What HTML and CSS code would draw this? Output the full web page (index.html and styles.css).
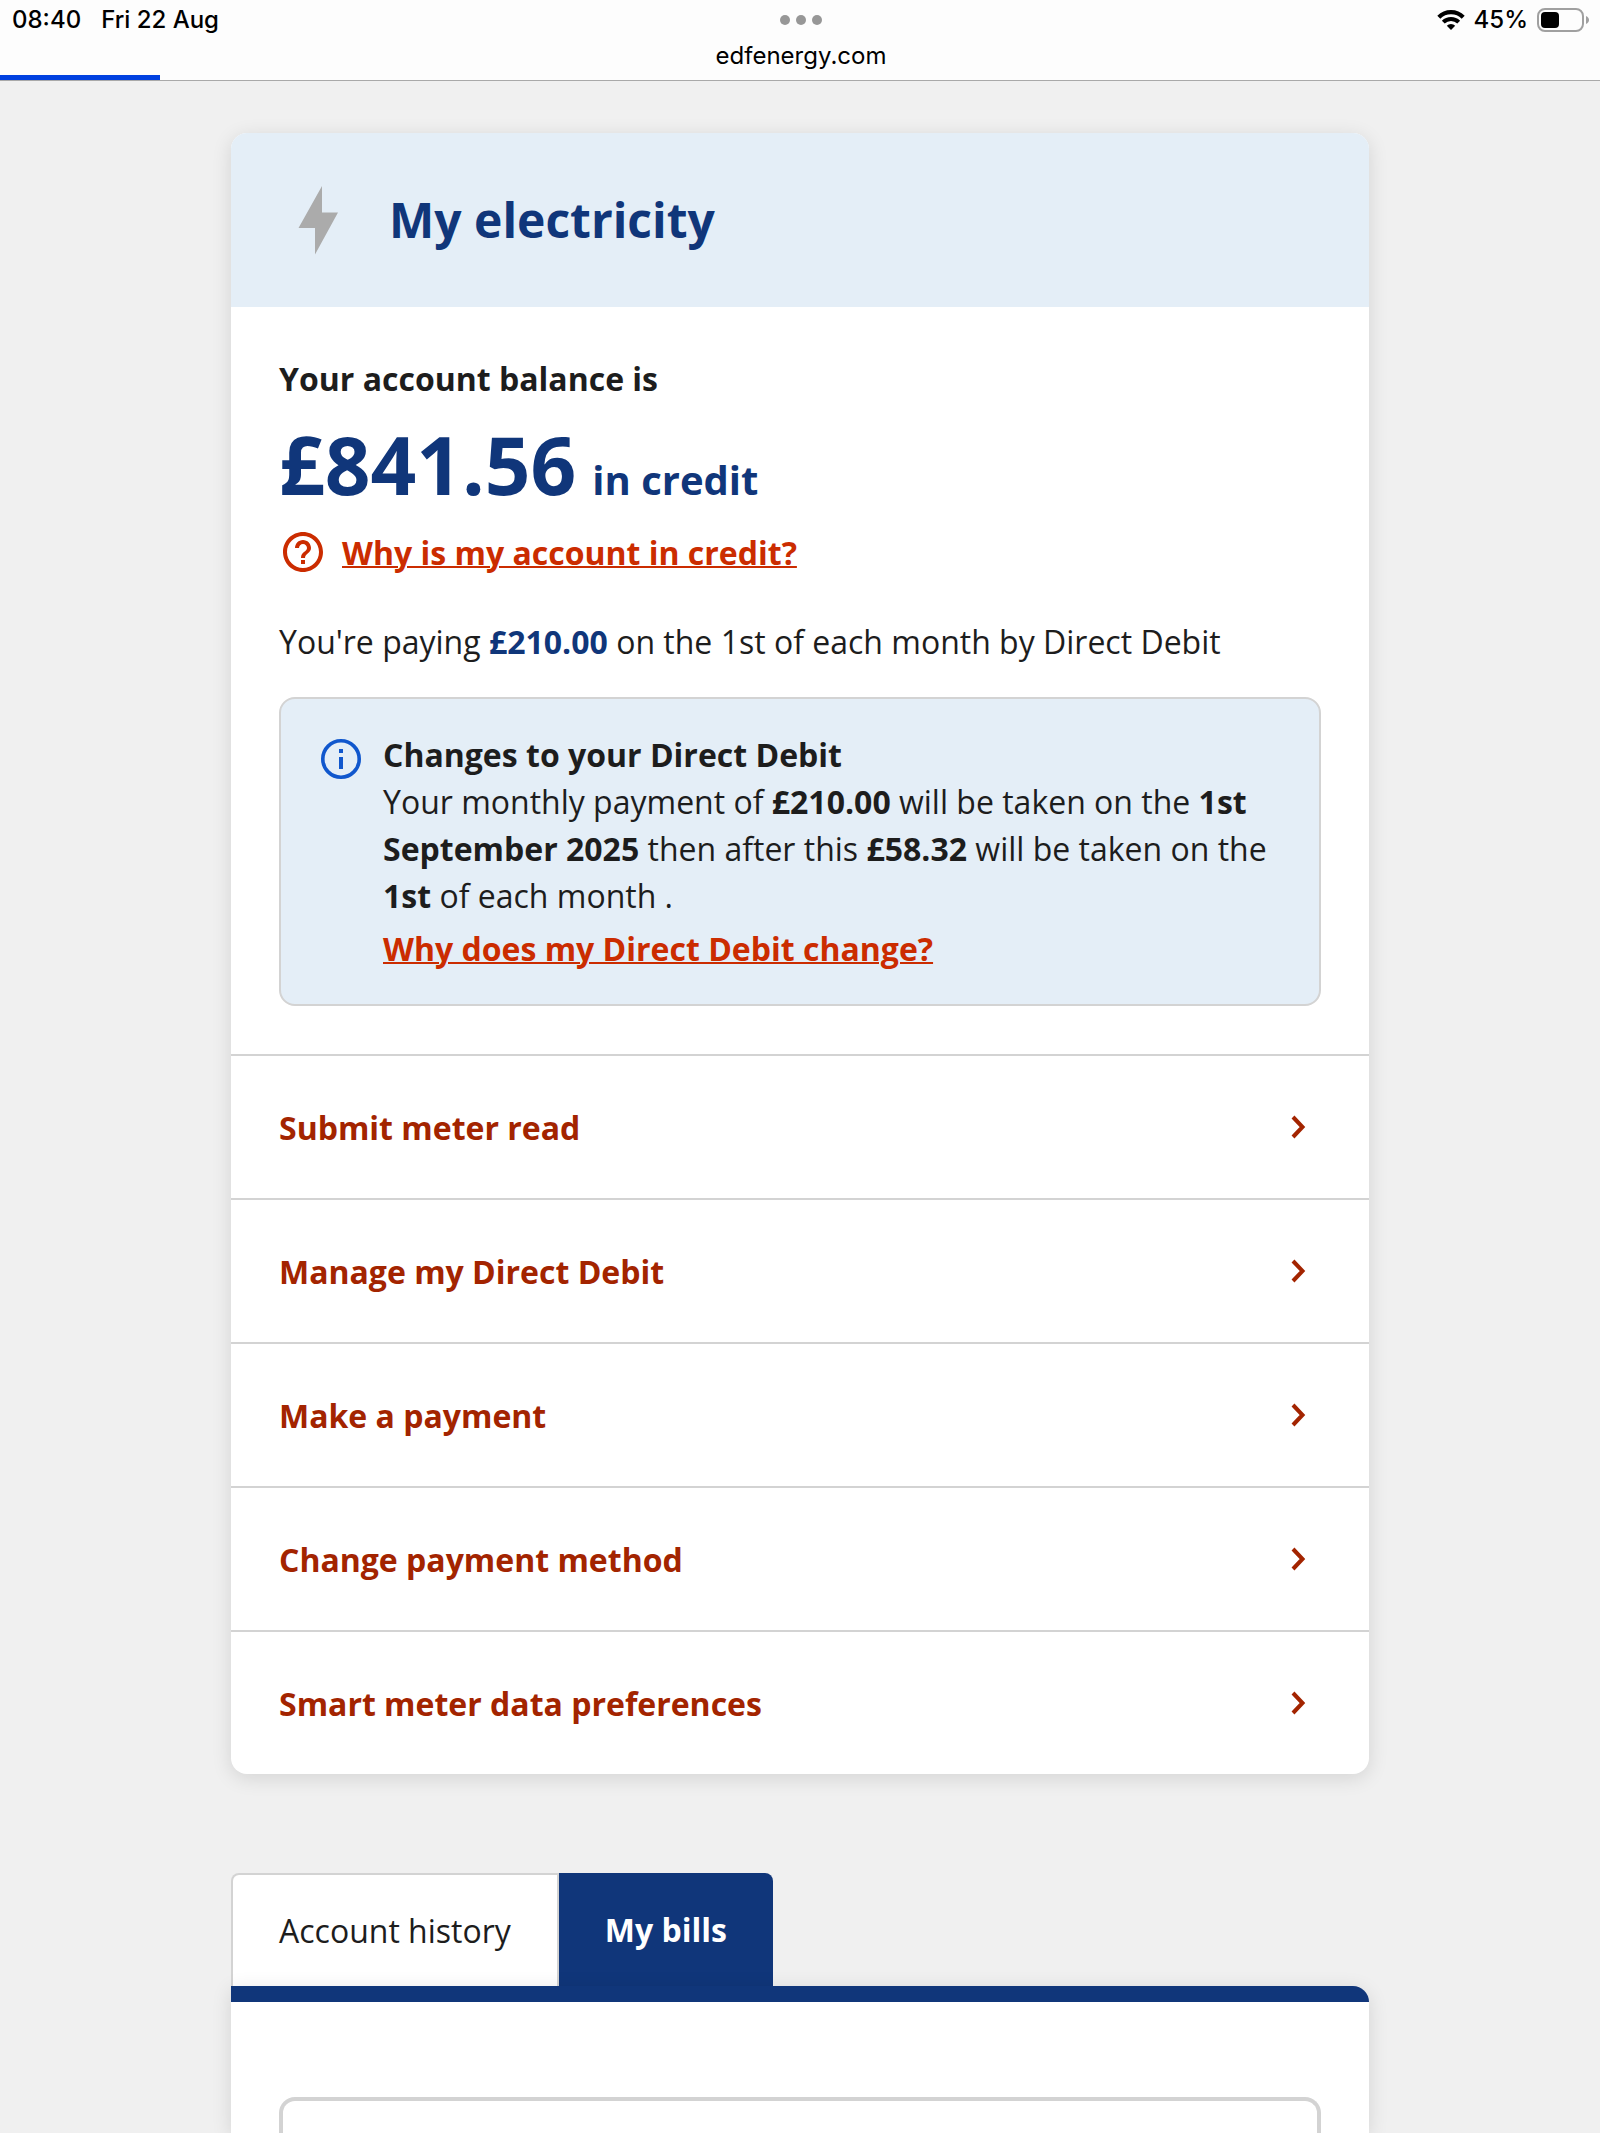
FILE: index.html
```html
<!DOCTYPE html>
<html lang="en">
<head>
  <meta charset="UTF-8">
  <meta name="viewport" content="width=device-width, initial-scale=1.0">
  <title>My electricity</title>
  <link rel="stylesheet" href="styles.css">
</head>
<body>
  <header class="browser-bar">
    <div class="status-left">
      <span>08:40</span>
      <span>Fri 22 Aug</span>
    </div>
    <div class="address">
      <svg class="dots" viewBox="0 0 42 10" aria-hidden="true">
        <circle cx="5" cy="5" r="5"/><circle cx="21" cy="5" r="5"/><circle cx="37" cy="5" r="5"/>
      </svg>
      <span>edfenergy.com</span>
    </div>
    <div class="status-right">
      <svg class="wifi" viewBox="0 0 28 20" aria-hidden="true">
        <path d="M1.800 7.200a17.200 17.200 0 0 1 24.400 0" fill="none" stroke="#000" stroke-width="4.200"/>
        <path d="M6.300 12.200a10.900 10.900 0 0 1 15.400 0" fill="none" stroke="#000" stroke-width="4"/>
        <path d="M14 20l-4.200-4.300a5.900 5.900 0 0 1 8.400 0z"/>
      </svg>
      <span>45%</span>
      <svg class="battery" viewBox="0 0 53 24" aria-hidden="true">
        <rect x="1" y="1" width="45" height="22" rx="7" fill="none" stroke="#a0a0a0" stroke-width="2"/>
        <rect x="4" y="4" width="18" height="16" rx="4"/>
        <path d="M49 8c4 1.500 4 6.500 0 8z" fill="#a0a0a0"/>
      </svg>
    </div>
    <div class="progress"></div>
  </header>

  <main class="page">
    <section class="card">
      <div class="card-header">
        <svg class="bolt" viewBox="0 0 78 78" aria-hidden="true">
          <path d="M43 5v26.500h16L36 73.500V47H19.500z" fill="#ababab"/>
        </svg>
        <h1>My electricity</h1>
      </div>

      <div class="card-body">
        <h2>Your account balance is</h2>
        <p class="balance"><strong>£841.56</strong> <span>in credit</span></p>
        <div class="help">
          <svg class="icon" viewBox="0 0 24 24" aria-hidden="true">
            <path fill="#cb2c00" d="M11 18h2v-2h-2v2zm1-16C6.480 2 2 6.480 2 12s4.480 10 10 10 10-4.480 10-10S17.520 2 12 2zm0 18c-4.410 0-8-3.590-8-8s3.590-8 8-8 8 3.590 8 8-3.590 8-8 8zm0-14c-2.210 0-4 1.790-4 4h2c0-1.100.9-2 2-2s2 .9 2 2c0 2-3 1.750-3 5h2c0-2.250 3-2.500 3-5 0-2.210-1.790-4-4-4z"/>
          </svg>
          <a class="link" href="#">Why is my account in credit?</a>
        </div>
        <p class="paying">You're paying <strong>£210.00</strong> on the 1st of each month by Direct Debit</p>

        <div class="notice">
          <svg class="icon" viewBox="0 0 24 24" aria-hidden="true">
            <circle cx="12" cy="12" r="9.100" fill="none" stroke="#1057cd" stroke-width="1.800"/>
            <path fill="#1057cd" d="M11 7h2v2h-2zM11 11h2v6h-2z"/>
          </svg>
          <div class="notice-text">
            <h3>Changes to your Direct Debit</h3>
            <p>Your monthly payment of <strong>£210.00</strong> will be taken on the <strong>1st September 2025</strong> then after this <strong>£58.32</strong> will be taken on the <strong>1st</strong> of each month .</p>
            <a class="link" href="#">Why does my Direct Debit change?</a>
          </div>
        </div>
      </div>

      <nav class="actions">
        <a href="#">Submit meter read
          <svg class="chevron" viewBox="0 0 16 24" aria-hidden="true"><path d="M3 2l9.500 10L3 22"/></svg></a>
        <a href="#">Manage my Direct Debit
          <svg class="chevron" viewBox="0 0 16 24" aria-hidden="true"><path d="M3 2l9.500 10L3 22"/></svg></a>
        <a href="#">Make a payment
          <svg class="chevron" viewBox="0 0 16 24" aria-hidden="true"><path d="M3 2l9.500 10L3 22"/></svg></a>
        <a href="#">Change payment method
          <svg class="chevron" viewBox="0 0 16 24" aria-hidden="true"><path d="M3 2l9.500 10L3 22"/></svg></a>
        <a href="#">Smart meter data preferences
          <svg class="chevron" viewBox="0 0 16 24" aria-hidden="true"><path d="M3 2l9.500 10L3 22"/></svg></a>
      </nav>
    </section>

    <section class="bills">
      <div class="tabs" role="tablist">
        <button class="tab" type="button" role="tab" aria-selected="false">Account history</button>
        <button class="tab active" type="button" role="tab" aria-selected="true">My bills</button>
      </div>
      <div class="panel" role="tabpanel">
        <div class="bill-box"></div>
      </div>
    </section>
  </main>
</body>
</html>
```
FILE: styles.css
```css
:root {
  --navy: #10367a;
  --pale-blue: #e4eef7;
  --link: #cb2c00;
  --action: #a32400;
  --text: #1d1d1d;
  --line: #d3d3d3;
  --shadow: 0 4px 20px rgba(0, 0, 0, 0.12);
}

* {
  box-sizing: border-box;
}

body {
  margin: 0;
  min-height: 100vh;
  display: flex;
  flex-direction: column;
  background-color: #f0f0f0;
  color: var(--text);
  font-family: "Open Sans", "Noto Sans", sans-serif;
  font-size: 32px;
  line-height: 47px;
}

h1, h2, h3, p {
  margin: 0;
}

h2, h3 {
  font-size: 32px;
}

strong {
  font-weight: 700;
}

/* Browser bar */
.browser-bar {
  position: relative;
  display: grid;
  grid-template-columns: 1fr auto 1fr;
  height: 81px;
  padding: 0 10px 0 12px;
  background-color: #fdfdfd;
  border-bottom: 1px solid #a9a9a9;
  color: #000;
  font-family: Inter, "Liberation Sans", sans-serif;
  font-size: 24px;
  font-weight: 500;
  line-height: 40px;
}

.status-left, .status-right {
  display: flex;
  align-items: center;
  height: 40px;
}

.status-left {
  gap: 20px;
}

.status-right {
  justify-content: flex-end;
  gap: 9px;
}

.address {
  display: flex;
  flex-direction: column;
  align-items: center;
  padding-top: 15px;
  font-weight: 400;
  line-height: 32px;
  gap: 15px;
}

.dots {
  width: 42px;
  height: 10px;
  fill: #979797;
}

.wifi {
  width: 28px;
  height: 20px;
}

.battery {
  width: 53px;
  height: 24px;
}

.progress {
  position: absolute;
  left: 0;
  bottom: 0;
  width: 10%;
  height: 5px;
  background-color: #0040e0;
}

/* Account card */
.page {
  flex: 1;
  display: flex;
  flex-direction: column;
  width: calc(100% - 32px);
  max-width: 1138px;
  margin: 0 auto;
  padding-top: 52px;
}

.card {
  background-color: #fff;
  border-radius: 16px;
  box-shadow: var(--shadow);
  overflow: hidden;
}

.card-header {
  display: flex;
  align-items: center;
  gap: 32px;
  padding: 48px;
  background-color: var(--pale-blue);
}

.card-header h1 {
  color: var(--navy);
  font-size: 48px;
  line-height: 66px;
}

.bolt {
  width: 78px;
  height: 78px;
}

.card-body {
  padding: 48px;
}

.balance {
  display: flex;
  align-items: baseline;
  gap: 16px;
  margin-top: 14px;
  color: var(--navy);
  font-size: 40px;
  font-weight: 700;
  line-height: 48px;
}

.balance strong {
  font-size: 80px;
  line-height: 96px;
}

.help {
  display: flex;
  align-items: center;
  gap: 15px;
  margin-top: 16px;
}

.icon {
  flex: none;
  width: 48px;
  height: 48px;
}

.link {
  color: var(--link);
  font-weight: 700;
  text-decoration-thickness: 2px;
}

.paying {
  margin: 42px 0 32px;
}

.paying strong {
  color: var(--navy);
}

.notice {
  display: flex;
  gap: 18px;
  padding: 32px 36px;
  background-color: var(--pale-blue);
  border: 2px solid var(--line);
  border-radius: 16px;
}

.notice .icon {
  margin-top: 4px;
}

.notice .link {
  display: inline-block;
  margin-top: 6px;
}

.actions a {
  display: flex;
  justify-content: space-between;
  align-items: center;
  height: 144px;
  padding: 0 63px 0 48px;
  border-top: 2px solid var(--line);
  color: var(--action);
  font-weight: 700;
  text-decoration: none;
}

.chevron {
  width: 16px;
  height: 24px;
  fill: none;
  stroke: var(--action);
  stroke-width: 4;
}

/* Bills tabs */
.bills {
  flex: 1;
  display: flex;
  flex-direction: column;
  margin-top: 99px;
}

.tabs {
  display: flex;
}

.tab {
  height: 113px;
  padding: 0 46px;
  background-color: #fff;
  border: 2px solid var(--line);
  border-bottom: 0;
  border-radius: 8px 0 0 0;
  color: var(--text);
  font: inherit;
}

.tab.active {
  background-color: var(--navy);
  border: 0;
  border-radius: 0 8px 0 0;
  color: #fff;
  font-weight: 700;
}

.panel {
  flex: 1;
  display: flex;
  padding: 95px 48px 0;
  background: linear-gradient(var(--navy) 16px, #fff 16px);
  border-radius: 0 16px 0 0;
  box-shadow: var(--shadow);
}

.bill-box {
  flex: 1;
  margin-top: 16px;
  border: 4px solid var(--line);
  border-bottom: 0;
  border-radius: 16px 16px 0 0;
}
```
